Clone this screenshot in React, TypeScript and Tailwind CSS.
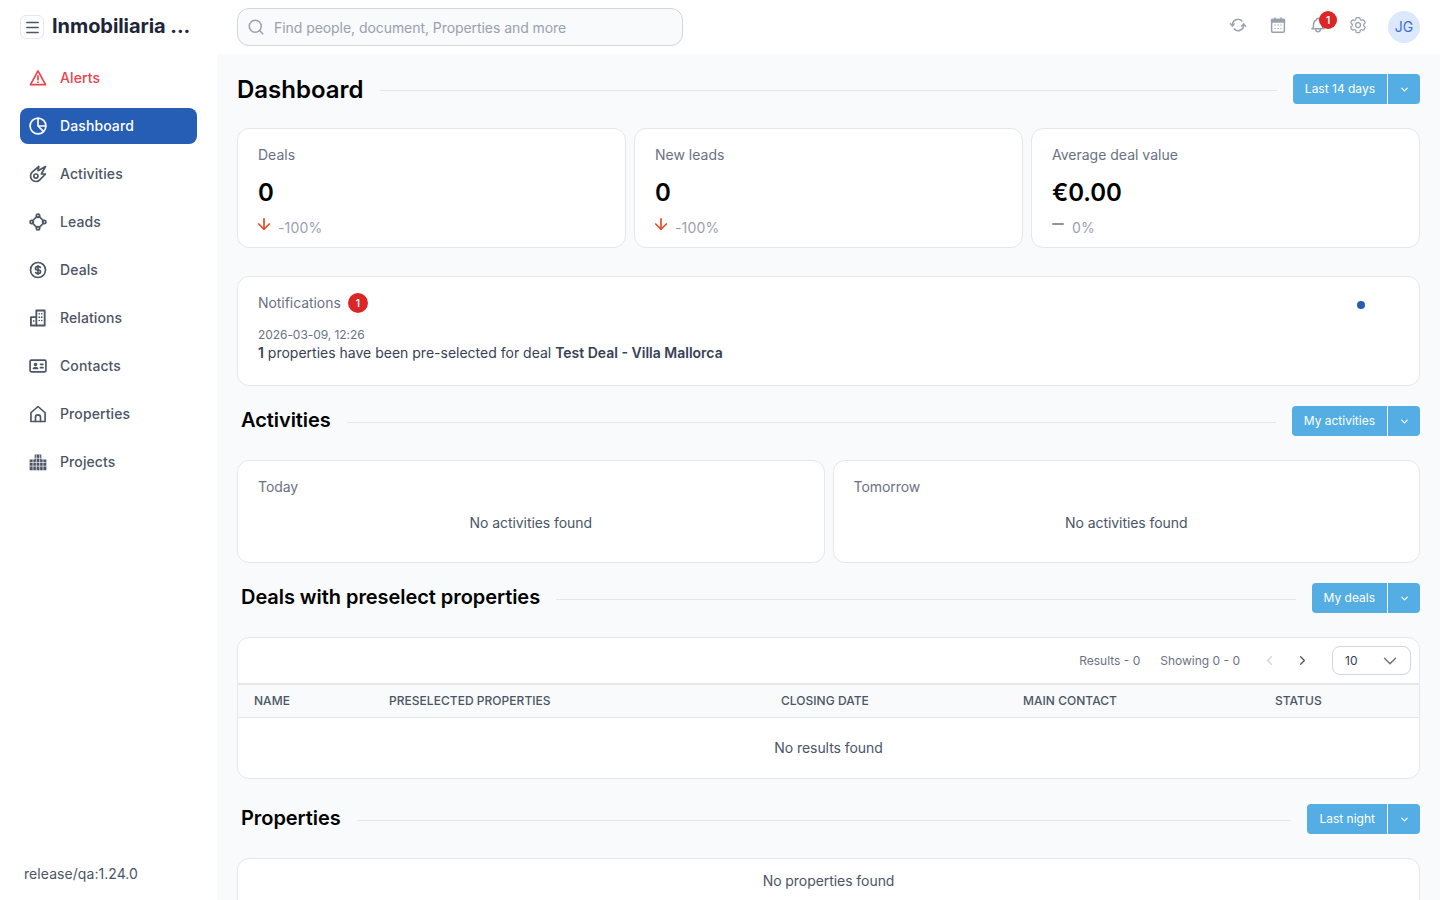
import { ReactNode } from 'react';
import { ArrowDown, ChevronDown, ChevronLeft, ChevronRight, Menu, Minus, Search } from 'lucide-react';
import { TbBell, TbCoin, TbMeteor } from 'react-icons/tb';
import { HiOutlineCog6Tooth } from 'react-icons/hi2';

type IconProps = { size?: number; className?: string };

function Svg({ size = 20, className, children }: IconProps & { children: ReactNode }) {
  return (
    <svg width={size} height={size} viewBox="0 0 24 24" fill="none" stroke="currentColor" strokeWidth={2} strokeLinecap="round" strokeLinejoin="round" className={className}>
      {children}
    </svg>
  );
}

function AlertIcon(props: IconProps) {
  return (
    <Svg {...props}>
      <path d="M12 3.500 21 20H3z" />
      <path d="M12 9.500v4.500M12 17h.01" />
    </Svg>
  );
}

function PieIcon(props: IconProps) {
  return (
    <Svg {...props}>
      <circle cx="12" cy="12" r="9.5" />
      <path d="M12 3v9l6.5 6.5M12 12h9" />
    </Svg>
  );
}

function LeadsIcon(props: IconProps) {
  return (
    <Svg {...props}>
      <path d="M10.500 5.500 5.500 10.500M13.500 5.500l5 5M5.500 13.500l5 5M18.500 13.500l-5 5" />
      <circle cx="12" cy="4.500" r="2" />
      <circle cx="4.500" cy="12" r="2" />
      <circle cx="19.500" cy="12" r="2" />
      <circle cx="12" cy="19.500" r="2" />
    </Svg>
  );
}

function RelationsIcon(props: IconProps) {
  return (
    <Svg {...props}>
      <path strokeWidth={2.2} d="M10 21V3h10v18H3.500V11H10" />
      <path d="M13.500 7h.01M16.500 7h.01M13.500 11h.01M16.500 11h.01M13.500 15h.01M16.500 15h.01M6.800 15.500h.01" />
    </Svg>
  );
}

function ContactsIcon(props: IconProps) {
  return (
    <Svg {...props}>
      <rect x="2.500" y="5" width="19" height="14" rx="1.500" />
      <circle cx="9" cy="10.200" r="1.200" />
      <path d="M6.500 15c.5-1.500 4.500-1.500 5 0z" />
      <path d="M15 10h3M15 14h3" />
    </Svg>
  );
}

function HomeIcon(props: IconProps) {
  return (
    <Svg {...props}>
      <path d="M3.500 21V10.500L12 3l8.500 7.500V21z" />
      <path d="M9 21v-5a3 3 0 0 1 6 0v5" />
    </Svg>
  );
}

function ProjectsIcon(props: IconProps) {
  return (
    <svg width={props.size ?? 20} height={props.size ?? 20} viewBox="0 0 24 24" className={props.className}>
      <path fill="currentColor" d="M8 3h8v6h6v13H2V9h6z" />
      <path stroke="#fff" strokeWidth="0.8" d="M2 12.500h20M2 17h20M8 7.500h8M6 9v13M10 3v19M14 3v19M18 9v13" />
    </svg>
  );
}

function CalendarIcon(props: IconProps) {
  return (
    <Svg {...props}>
      <rect x="3.500" y="4.500" width="17" height="17" rx="1.500" />
      <rect x="3.500" y="4.500" width="17" height="3.500" fill="currentColor" />
      <path d="M8 2.500v3M16 2.500v3" />
      <path strokeWidth="1.800" d="M8 12h.01M12 12h.01M16 12h.01M8 16.500h.01M12 16.500h.01M16 16.500h.01" />
    </Svg>
  );
}

function SyncIcon(props: IconProps) {
  return (
    <Svg {...props}>
      <path d="M4.500 13a7.500 7.500 0 0 1 12.500-6.500" />
      <path d="M2 10.500 4.500 13.500 7 10.500" />
      <path d="M19.500 11a7.500 7.500 0 0 1-12.500 6.500" />
      <path d="M17 13.500 19.500 10.500 22 13.500" />
    </Svg>
  );
}

const navItems = [
  { label: 'Activities', icon: TbMeteor },
  { label: 'Leads', icon: LeadsIcon },
  { label: 'Deals', icon: TbCoin },
  { label: 'Relations', icon: RelationsIcon },
  { label: 'Contacts', icon: ContactsIcon },
  { label: 'Properties', icon: HomeIcon },
  { label: 'Projects', icon: ProjectsIcon },
];

function Sidebar() {
  return (
    <aside className="w-[217px] shrink-0 h-[900px] bg-white flex flex-col">
      <div className="h-[54px] flex items-center pl-5 gap-2">
        <div className="w-6 h-6 rounded-md border border-gray-200 flex items-center justify-center text-gray-600">
          <Menu size={17} />
        </div>
        <span className="text-xl font-bold text-[#1e2538] leading-none -mt-0.5">Inmobiliaria ...</span>
      </div>
      <nav className="px-5 mt-1.5 flex flex-col tracking-[0.1px]">
        <a className="h-9 mb-3 rounded-lg flex items-center pl-2 gap-3 text-sm font-medium text-[#f0424a]">
          <AlertIcon size={20} />
          Alerts
        </a>
        <a className="h-9 mb-3 rounded-lg flex items-center pl-2 gap-3 text-sm font-medium text-white bg-[#265db5]">
          <PieIcon size={20} />
          Dashboard
        </a>
        {navItems.map(item => (
          <a key={item.label} className="h-9 mb-3 rounded-lg flex items-center pl-2 gap-3 text-sm font-medium text-[#4b5565]">
            <item.icon size={20} />
            {item.label}
          </a>
        ))}
      </nav>
      <div className="mt-auto pl-6 pb-4 text-sm text-[#4b5565] tracking-[0.06px]">release/qa:1.24.0</div>
    </aside>
  );
}

function Topbar() {
  return (
    <header className="h-[54px] bg-white flex items-center pl-5 pr-5">
      <div className="w-[446px] h-[38px] rounded-xl border border-gray-300 bg-[#f9fafb] flex items-center pl-[9px] gap-[9px] text-sm text-gray-400">
        <Search size={18} className="text-gray-400" />
        <span className="mt-0.5">Find people, document, Properties and more</span>
      </div>
      <div className="ml-auto flex items-center text-gray-400">
        <div className="flex items-center pb-1">
          <SyncIcon size={18} className="mr-[22px]" />
          <CalendarIcon size={18} className="mr-[22px]" />
          <div className="relative mr-[21px]">
            <TbBell size={18} />
            <span className="absolute -top-[5px] left-[10px] w-[18px] h-[18px] rounded-full bg-[#dc2626] text-white text-[10px] font-semibold flex items-center justify-center">1</span>
          </div>
          <HiOutlineCog6Tooth size={20} className="mr-5" />
        </div>
        <div className="w-8 h-8 rounded-full bg-[#dbe8fe] text-[#3b6fe0] text-sm flex items-center justify-center">JG</div>
      </div>
    </header>
  );
}

function SplitButton({ label }: { label: string }) {
  return (
    <div className="flex h-[30px] rounded text-white text-xs tracking-normal shrink-0">
      <div className="bg-[#55aee3] rounded-l px-3 flex items-center">{label}</div>
      <div className="bg-[#55aee3] rounded-r w-8 ml-px flex items-center justify-center">
        <ChevronDown size={11} strokeWidth={2.5} />
      </div>
    </div>
  );
}

function SectionHeader({ title, action, className }: { title: string; action: string; className: string }) {
  return (
    <div className={`flex items-center ${className}`}>
      <h2 className="text-xl font-semibold text-black whitespace-nowrap pb-0.5">{title}</h2>
      <div className="flex-1 h-px bg-gray-200 mx-4 mt-0.5" />
      <SplitButton label={action} />
    </div>
  );
}

function StatCard({ label, value, delta, flat }: { label: string; value: string; delta: string; flat?: boolean }) {
  return (
    <div className="flex-1 h-[120px] rounded-xl border border-gray-200 bg-white pl-5 pt-4">
      <div className="text-sm text-gray-500 leading-5 tracking-normal">{label}</div>
      <div className="text-2xl font-semibold text-black leading-8 mt-3">{value}</div>
      <div className="flex items-center gap-[5px] mt-[9px] h-5 text-sm text-gray-400 tracking-[0.15px]">
        {flat ? (
          <Minus size={18} className="text-gray-500 -ml-[3px] -mt-2" />
        ) : (
          <ArrowDown size={18} strokeWidth={2.25} className="text-[#e8472b] -ml-[3px] -mt-2" />
        )}
        {delta}
      </div>
    </div>
  );
}

function EmptyCard({ label }: { label: string }) {
  return (
    <div className="flex-1 h-[103px] rounded-xl border border-gray-200 bg-white pt-4">
      <div className="pl-5 text-sm text-gray-500 leading-5">{label}</div>
      <div className="text-center text-sm text-gray-600 leading-5 mt-4">No activities found</div>
    </div>
  );
}

function Th({ width, children }: { width: string; children: ReactNode }) {
  return <div className={`${width} text-xs font-medium text-gray-600 tracking-[0.03px]`}>{children}</div>;
}

export default function App() {
  return (
    <div className="w-[1440px] h-[900px] overflow-hidden flex bg-[#f9fafb] font-['Inter',sans-serif] tracking-[-0.06px]">
      <Sidebar />
      <div className="flex-1 min-w-0">
        <Topbar />
        <main className="pl-5 pr-5">
          <div className="flex items-center h-[30px] mt-5">
            <h1 className="text-2xl font-semibold text-black whitespace-nowrap pt-0.5 tracking-normal">Dashboard</h1>
            <div className="flex-1 h-px bg-gray-200 mx-4 mt-0.5" />
            <SplitButton label="Last 14 days" />
          </div>

          <div className="flex gap-2 mt-[24px]">
            <StatCard label="Deals" value="0" delta="-100%" />
            <StatCard label="New leads" value="0" delta="-100%" />
            <StatCard label="Average deal value" value="€0.00" delta="0%" flat />
          </div>

          <div className="relative mt-7 h-[110px] rounded-xl border border-gray-200 bg-white pl-5 pt-4">
            <div className="flex items-center gap-[7px] text-sm text-gray-500 h-5">
              Notifications
              <span className="w-5 h-5 rounded-full bg-[#dc2626] text-white text-[10px] font-semibold flex items-center justify-center">1</span>
            </div>
            <div className="text-xs text-gray-500 mt-[14px] leading-4">2026-03-09, 12:26</div>
            <div className="text-sm text-gray-700 leading-5 tracking-normal">
              <b className="font-semibold">1</b> properties have been pre-selected for deal <b className="font-semibold">Test Deal - Villa Mallorca</b>
            </div>
            <span className="absolute top-6 right-[54px] w-2 h-2 rounded-full bg-[#265db5]" />
          </div>

          <SectionHeader title="Activities" action="My activities" className="h-[30px] mt-5 pl-1" />

          <div className="flex gap-2 mt-[24px]">
            <EmptyCard label="Today" />
            <EmptyCard label="Tomorrow" />
          </div>

          <SectionHeader title="Deals with preselect properties" action="My deals" className="h-[30px] mt-5 pl-1" />

          <div className="mt-[24px] h-[142px] rounded-xl border border-gray-200 bg-white overflow-hidden">
            <div className="h-[47px] flex items-center justify-end pr-2 text-xs text-gray-500 tracking-normal border-b-2 border-gray-200">
              <span>Results - 0</span>
              <span className="ml-5">Showing 0 - 0</span>
              <ChevronLeft size={15} className="ml-[22px] text-gray-300" />
              <ChevronRight size={15} className="ml-[18px] text-gray-600" />
              <div className="ml-[22px] w-[79px] h-[29px] rounded-lg border border-gray-300 flex items-center justify-between pl-3 pr-[9px] text-gray-700">
                10
                <ChevronDown size={22} strokeWidth={1.5} className="text-gray-500" />
              </div>
            </div>
            <div className="h-[33px] flex items-center pl-4 bg-[#f9fafb] border-b border-gray-200">
              <Th width="w-[135px]">NAME</Th>
              <Th width="w-[392px]">PRESELECTED PROPERTIES</Th>
              <Th width="w-[242px]">CLOSING DATE</Th>
              <Th width="w-[252px]">MAIN CONTACT</Th>
              <Th width="w-[100px]">STATUS</Th>
            </div>
            <div className="h-[60px] flex items-center justify-center text-sm text-gray-600">No results found</div>
          </div>

          <SectionHeader title="Properties" action="Last night" className="h-[30px] mt-[25px] pl-1" />

          <div className="mt-[24px] h-[60px] rounded-xl border border-gray-200 bg-white pt-3 text-center text-sm text-gray-600">
            No properties found
          </div>
        </main>
      </div>
    </div>
  );
}
